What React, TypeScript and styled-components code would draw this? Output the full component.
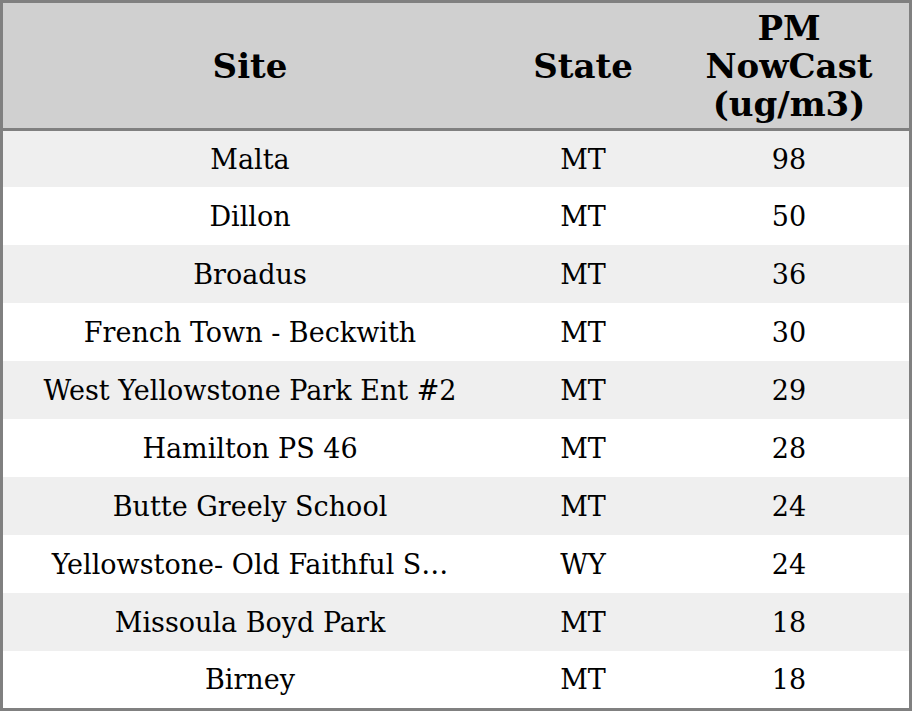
import React from 'react';
import styled, { createGlobalStyle } from 'styled-components';

const GlobalStyle = createGlobalStyle`
  html, body {
    margin: 0;
    padding: 0;
    background: #ffffff;
  }
  * {
    box-sizing: border-box;
  }
`;

const Table = styled.table`
  width: 912px;
  border: 3px solid #808080;
  border-collapse: separate;
  border-spacing: 0;
  table-layout: fixed;
  font-family: 'DejaVu Serif', 'Liberation Serif', serif;
  color: #000000;
`;

const HeadCell = styled.th<{ $width: number }>`
  width: ${(p) => p.$width}px;
  height: 128px;
  padding: 0 8px;
  background-color: #d0d0d0;
  border-bottom: 3px solid #808080;
  font-size: 34px;
  font-weight: bold;
  line-height: 38px;
  text-align: center;
  vertical-align: middle;
`;

const Row = styled.tr<{ $striped: boolean }>`
  height: 58px;
  background-color: ${(p) => (p.$striped ? '#efefef' : '#ffffff')};

  &:first-child {
    height: 56px;
  }
  &:last-child {
    height: 57px;
  }
`;

const Cell = styled.td`
  padding: 0 8px;
  font-size: 27px;
  text-align: center;
  vertical-align: middle;
  white-space: nowrap;
  overflow: hidden;
`;

interface Reading {
  site: string;
  state: string;
  pm: number;
}

const readings: Reading[] = [
  { site: 'Malta', state: 'MT', pm: 98 },
  { site: 'Dillon', state: 'MT', pm: 50 },
  { site: 'Broadus', state: 'MT', pm: 36 },
  { site: 'French Town - Beckwith', state: 'MT', pm: 30 },
  { site: 'West Yellowstone Park Ent #2', state: 'MT', pm: 29 },
  { site: 'Hamilton PS 46', state: 'MT', pm: 28 },
  { site: 'Butte Greely School', state: 'MT', pm: 24 },
  { site: 'Yellowstone- Old Faithful S\u2026', state: 'WY', pm: 24 },
  { site: 'Missoula Boyd Park', state: 'MT', pm: 18 },
  { site: 'Birney', state: 'MT', pm: 18 },
];

const App = () => (
  <>
    <GlobalStyle />
    <Table>
      <thead>
        <tr>
          <HeadCell $width={494}>Site</HeadCell>
          <HeadCell $width={172}>State</HeadCell>
          <HeadCell $width={240}>
            PM
            <br />
            NowCast
            <br />
            (ug/m3)
          </HeadCell>
        </tr>
      </thead>
      <tbody>
        {readings.map((r, i) => (
          <Row key={r.site} $striped={i % 2 === 0}>
            <Cell>{r.site}</Cell>
            <Cell>{r.state}</Cell>
            <Cell>{r.pm}</Cell>
          </Row>
        ))}
      </tbody>
    </Table>
  </>
);

export default App;
